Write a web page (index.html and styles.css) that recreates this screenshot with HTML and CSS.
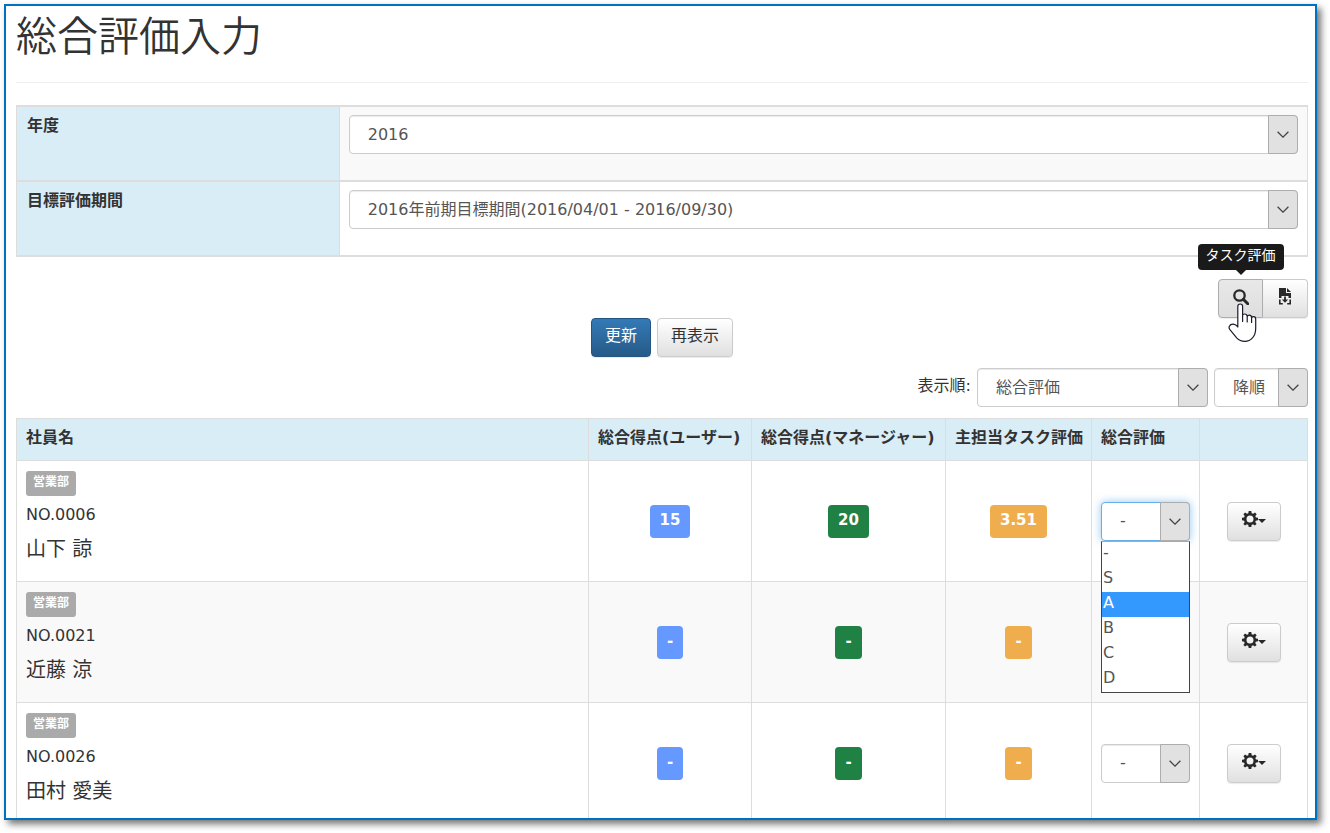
FILE: index.html
```html
<!DOCTYPE html>
<html lang="ja">
<head>
<meta charset="utf-8">
<title>総合評価入力</title>
<link rel="stylesheet" href="styles.css">
</head>
<body>
<svg class="sprite" aria-hidden="true">
  <symbol id="chevron" viewBox="0 0 12 7"><path d="M.6.7 6 6.100 11.400.7" fill="none" stroke="#444" stroke-width="1.300"/></symbol>
  <symbol id="gear" viewBox="0 0 16 16"><path fill="#282828" fill-rule="evenodd" d="M6.700 0h2.600l.4 2.200 1.400.6L13 1.500 14.700 3.200l-1.400 1.800.6 1.400 2.100.4v2.500l-2.200.4-.6 1.400 1.400 1.800-1.800 1.700-1.800-1.300-1.400.6L9.300 16H6.700l-.4-2.100-1.400-.6-1.800 1.300-1.700-1.700 1.300-1.800-.6-1.400L0 9.300V6.800l2.100-.4.6-1.400L1.400 3.200l1.700-1.700 1.800 1.300 1.400-.6zM8 4.500a3.500 3.500 0 1 0 0 7 3.500 3.500 0 0 0 0-7z"/></symbol>
  <symbol id="caret" viewBox="0 0 8 4"><path d="M0 0h8L4 4z" fill="#282828"/></symbol>
</svg>
<main class="frame">
  <h1 class="title">総合評価入力</h1>

  <table class="grid filters">
    <tr>
      <th scope="row"><label for="year">年度</label></th>
      <td><span class="select"><select id="year"><option>2016</option></select><span class="arrow"><svg><use href="#chevron"/></svg></span></span></td>
    </tr>
    <tr>
      <th scope="row"><label for="period">目標評価期間</label></th>
      <td><span class="select"><select id="period"><option>2016年前期目標期間(2016/04/01 - 2016/09/30)</option></select><span class="arrow"><svg><use href="#chevron"/></svg></span></span></td>
    </tr>
  </table>

  <div class="tools">
    <div class="tool-wrap">
      <button type="button" class="btn tool tool-first" aria-label="タスク評価" aria-describedby="tip">
        <svg viewBox="0 0 16 16" width="16" height="16"><circle cx="6.500" cy="6.500" r="5.200" fill="none" stroke="#282828" stroke-width="2.300"/><path d="m10.300 10.300 4.500 4.500" stroke="#282828" stroke-width="3" stroke-linecap="round"/></svg>
      </button>
      <span class="tooltip" id="tip" role="tooltip">タスク評価</span>
      <svg class="pointer" viewBox="0 0 30 40" width="30" height="40"><path d="M9.800 21.500V3.600Q9.800 1 12.200 1t2.400 2.600v8.900q.2-1.500 2.100-1.500 2.300 0 2.500 2.400.5-1.200 2.100-1.200 2.200 0 2.300 2.500.5-1.100 2-1.100 2.100 0 2.100 2.600v9.300q0 6-3.200 9.300-3 3.500-7.800 3.500-4.700 0-7.800-3.200l-7-8.500q-1.400-1.600-.5-3.400Q2.500 21 5.300 21.200q2.800.2 4.500 2.800zM14.600 12.500v6M19.200 13.500v5.500M23.600 14.800v4.700" fill="#fff" stroke="#1b1b2b" stroke-width="1.200" stroke-linejoin="round" stroke-linecap="round"/></svg>
    </div>
    <button type="button" class="btn tool tool-last" aria-label="ダウンロード">
      <svg viewBox="0 0 14 17" width="14" height="17"><path d="M1 0h7v5h5v5h-2.500V8h-7v2H1z" fill="#282828"/><path d="m9 0 4 4H9z" fill="#282828"/><path d="M6.100 8.500h1.800v3h2.300L7 14.700l-3.200-3.200h2.300z" fill="#282828"/><path d="M1.800 11.500v4.300h3M12.200 11.500v4.300h-3" fill="none" stroke="#282828" stroke-width="1.600"/></svg>
    </button>
  </div>

  <div class="actions">
    <button type="submit" class="btn primary">更新</button>
    <button type="button" class="btn">再表示</button>
  </div>

  <div class="sorting">
    <label for="sort">表示順:</label>
    <span class="select sort-key"><select id="sort"><option>総合評価</option></select><span class="arrow"><svg><use href="#chevron"/></svg></span></span>
    <span class="select sort-dir"><select aria-label="並び順"><option>降順</option></select><span class="arrow"><svg><use href="#chevron"/></svg></span></span>
  </div>

  <table class="grid results">
    <colgroup><col><col class="c-user"><col class="c-manager"><col class="c-task"><col class="c-small"><col class="c-small"></colgroup>
    <thead>
      <tr><th scope="col">社員名</th><th scope="col">総合得点(ユーザー)</th><th scope="col">総合得点(マネージャー)</th><th scope="col">主担当タスク評価</th><th scope="col">総合評価</th><td></td></tr>
    </thead>
    <tbody>
      <tr>
        <td class="person"><span class="dept">営業部</span><div class="no">NO.0006</div><div class="name">山下 諒</div></td>
        <td><span class="score blue">15</span></td>
        <td><span class="score green">20</span></td>
        <td><span class="score amber">3.51</span></td>
        <td><span class="select focused"><select aria-label="山下 諒の総合評価"><option>-</option></select><span class="arrow"><svg><use href="#chevron"/></svg></span>
          <span class="options" role="listbox" aria-label="総合評価"><span role="option">-</span><span role="option">S</span><span role="option" class="current" aria-selected="true">A</span><span role="option">B</span><span role="option">C</span><span role="option">D</span></span></span></td>
        <td><button type="button" class="btn menu" aria-label="設定"><svg class="gear"><use href="#gear"/></svg><svg class="caret"><use href="#caret"/></svg></button></td>
      </tr>
      <tr>
        <td class="person"><span class="dept">営業部</span><div class="no">NO.0021</div><div class="name">近藤 涼</div></td>
        <td><span class="score blue">-</span></td>
        <td><span class="score green">-</span></td>
        <td><span class="score amber">-</span></td>
        <td><span class="select"><select aria-label="近藤 涼の総合評価"><option>-</option></select><span class="arrow"><svg><use href="#chevron"/></svg></span></span></td>
        <td><button type="button" class="btn menu" aria-label="設定"><svg class="gear"><use href="#gear"/></svg><svg class="caret"><use href="#caret"/></svg></button></td>
      </tr>
      <tr>
        <td class="person"><span class="dept">営業部</span><div class="no">NO.0026</div><div class="name">田村 愛美</div></td>
        <td><span class="score blue">-</span></td>
        <td><span class="score green">-</span></td>
        <td><span class="score amber">-</span></td>
        <td><span class="select"><select aria-label="田村 愛美の総合評価"><option>-</option></select><span class="arrow"><svg><use href="#chevron"/></svg></span></span></td>
        <td><button type="button" class="btn menu" aria-label="設定"><svg class="gear"><use href="#gear"/></svg><svg class="caret"><use href="#caret"/></svg></button></td>
      </tr>
    </tbody>
  </table>
</main>
</body>
</html>
```
FILE: styles.css
```css
* { box-sizing: border-box; }

body {
  margin: 0;
  padding: 4px 13px 13px 4px;
  height: 100vh;
  overflow: hidden;
  background: #fff;
  color: #333;
  font: 16px/24px "DejaVu Sans", "Noto Sans CJK JP", sans-serif;
}

.sprite { display: none; }

.frame {
  height: 100%;
  overflow: hidden;
  padding: 3px 7px 0 10px;
  border: 2px solid #0070c0;
  background: #fff;
  box-shadow: 4px 4px 7px rgba(0, 0, 0, .55);
}

.title {
  margin: 0 0 22px;
  padding-bottom: 25px;
  border-bottom: 1px solid #eee;
  font-family: "Noto Sans CJK JP", sans-serif;
  font-size: 41px;
  font-weight: 350;
  line-height: 48px;
}

.grid {
  width: 100%;
  table-layout: fixed;
  border-collapse: collapse;
}

.grid th,
.grid td { border: 1px solid #ddd; }

.grid th,
.results thead td {
  background: #d9edf7;
  text-align: left;
  white-space: nowrap;
}

.grid.filters th,
.grid.filters td { border-top-width: 2px; border-bottom-width: 2px; }
.filters th { width: 25%; padding: 7px 10px; vertical-align: top; }
.filters td { height: 75px; padding: 8px 9px 0; vertical-align: top; }
.filters tr:first-child td { background: #f9f9f9; }

.select {
  position: relative;
  display: block;
}

.select select {
  display: block;
  width: 100%;
  height: 39px;
  padding: 0 30px 0 18px;
  appearance: none;
  border: 1px solid #ccc;
  border-radius: 4px;
  background: #fff;
  box-shadow: inset 0 1px 1px rgba(0, 0, 0, .08);
  color: #555;
  font: inherit;
}

.arrow {
  position: absolute;
  top: 0;
  right: 0;
  bottom: 0;
  width: 30px;
  display: grid;
  place-items: center;
  border: 1px solid #adadad;
  border-radius: 0 4px 4px 0;
  background: #e1e1e1;
  pointer-events: none;
}
.arrow svg { width: 12px; height: 7px; }

.btn {
  height: 39px;
  padding: 0 13px 4px;
  border: 1px solid #ccc;
  border-radius: 4px;
  background: linear-gradient(#fff, #e0e0e0);
  box-shadow: 0 1px 1px rgba(0, 0, 0, .08);
  color: #333;
  font: inherit;
}
.btn.primary {
  border-color: #245580;
  background: linear-gradient(#337ab7, #265a88);
  color: #fff;
}

.tools {
  display: flex;
  justify-content: flex-end;
  padding-top: 22px;
}
.tool-wrap { position: relative; display: flex; }
.btn.tool { width: 45px; padding: 0 0 4px; display: grid; place-items: center; }
.tool-first {
  border-color: #adadad;
  border-radius: 4px 0 0 4px;
  background: linear-gradient(#e8e8e8, #dedede);
}
.tool-last { border-left: 0; border-radius: 0 4px 4px 0; }

.tooltip {
  position: absolute;
  bottom: 48px;
  left: 50%;
  transform: translateX(-50%);
  padding: 0 8px 3px;
  border-radius: 4px;
  background: #1a1a1a;
  color: #fff;
  font-size: 14px;
  line-height: 23px;
  white-space: nowrap;
}
.tooltip::after {
  content: "";
  position: absolute;
  top: 100%;
  left: 50%;
  margin-left: -5px;
  border: 5px solid transparent;
  border-bottom: 0;
  border-top-color: #1a1a1a;
}
.pointer { position: absolute; top: 24px; left: 10px; z-index: 1; }

.actions { display: flex; justify-content: center; gap: 6px; }

.sorting {
  display: flex;
  justify-content: flex-end;
  align-items: center;
  gap: 6px;
  padding: 11px 0;
}
.sorting label { padding-bottom: 4px; }
.sort-key { width: 231px; }
.sort-dir { width: 94px; }

.c-user { width: 163px; }
.c-manager { width: 194px; }
.c-task { width: 146px; }
.c-small { width: 108px; }

.results th { padding: 7px 9px 10px; }
.results tbody td {
  height: 121px;
  padding: 0 9px;
  text-align: center;
}
.results tbody tr:nth-child(even) { background: #f9f9f9; }
.results tbody .person { padding: 10px 9px; text-align: left; vertical-align: top; }

.dept {
  display: block;
  width: max-content;
  padding: 0 7px 3px;
  border-radius: 3px;
  background: #aaa;
  color: #fff;
  font-size: 12px;
  font-weight: 700;
  line-height: 22px;
}
.no { margin-top: 7px; }
.name { margin-top: 8px; font-size: 20px; line-height: 28px; }

.score {
  display: inline-block;
  padding: 0 10px 3px;
  border-radius: 4px;
  color: #fff;
  font-size: 15px;
  font-weight: 700;
  line-height: 30px;
  vertical-align: middle;
}
.blue { background: #6699ff; }
.green { background: #208144; }
.amber { background: #f0ad4e; }

.results .select { text-align: left; }
.focused select {
  border-color: #66afe9;
  box-shadow: 0 0 8px rgba(102, 175, 233, .7);
}
.options {
  position: absolute;
  top: 100%;
  left: 0;
  right: 0;
  z-index: 2;
  display: block;
  border: 1px solid #444;
  border-top-color: #aaa;
  background: #fff;
  color: #555;
}
.options span { display: block; padding: 0 1px 3px; line-height: 22px; }
.options .current { background: #3399ff; color: #fff; }

.btn.menu {
  width: 54px;
  padding: 0 0 4px;
  display: flex;
  align-items: center;
  justify-content: center;
  margin: 0 auto;
}
.gear { width: 16px; height: 16px; }
.caret { width: 8px; height: 4px; margin-top: 3px; }
```
